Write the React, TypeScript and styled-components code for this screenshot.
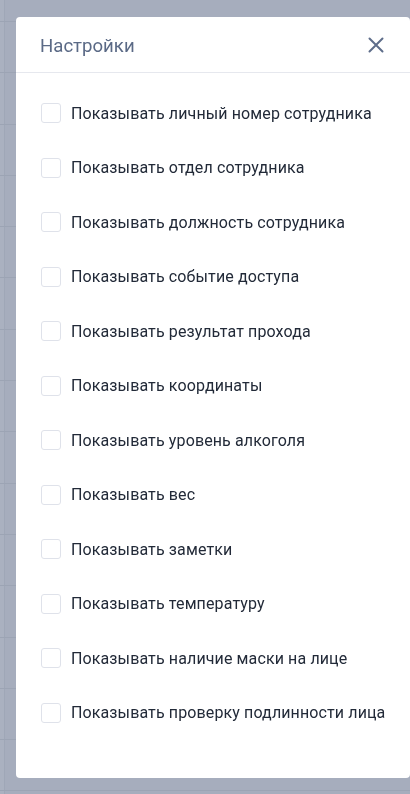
import React from "react";
import styled, { createGlobalStyle } from "styled-components";

const GlobalStyle = createGlobalStyle`
  html, body {
    margin: 0;
    padding: 0;
    background: #a9b0bf;
  }
  body {
    font-family: Roboto, "Liberation Sans", sans-serif;
  }
`;

const Page = styled.div`
  padding-top: 21px;
  height: 794px;
  box-sizing: border-box;
  overflow: hidden;
  background: linear-gradient(90deg, #aab1c0 0 4px, #9fa7b7 4px 5px, #a6adbd 5px);
`;

const BgRow = styled.div`
  height: 51.3px;
  border-top: 1px solid #9ca4b4;
  box-sizing: border-box;
`;

const Modal = styled.div`
  position: fixed;
  top: 17px;
  left: 16px;
  width: 394px;
  height: 761px;
  background: #ffffff;
  border-radius: 4px;
  display: flex;
  flex-direction: column;
  overflow: hidden;
`;

const Header = styled.div`
  height: 55px;
  flex-shrink: 0;
  display: flex;
  align-items: center;
  justify-content: space-between;
  padding: 0 26px 0 24px;
  border-bottom: 1px solid #e6e8ee;
`;

const Title = styled.h2`
  margin: 0;
  font-size: 18.6px;
  font-weight: 400;
  color: #5b6a86;
  padding-top: 2px;
`;

const CloseButton = styled.button`
  border: none;
  background: none;
  padding: 0;
  width: 16px;
  height: 16px;
  display: flex;
  align-items: center;
  justify-content: center;
  cursor: pointer;
`;

const List = styled.div`
  display: flex;
  flex-direction: column;
  gap: 34.5px;
  padding: 30px 24px 0 25px;
`;

const Row = styled.label`
  display: flex;
  align-items: center;
  gap: 10px;
  height: 20px;
  cursor: pointer;
`;

const Box = styled.span`
  width: 18px;
  height: 18px;
  flex-shrink: 0;
  border: 1px solid #dfe2ea;
  border-radius: 3px;
  background: #fff;
`;

const Label = styled.span`
  font-size: 16px;
  letter-spacing: 0.12px;
  color: #222a38;
  white-space: nowrap;
`;

const options = [
  "Показывать личный номер сотрудника",
  "Показывать отдел сотрудника",
  "Показывать должность сотрудника",
  "Показывать событие доступа",
  "Показывать результат прохода",
  "Показывать координаты",
  "Показывать уровень алкоголя",
  "Показывать вес",
  "Показывать заметки",
  "Показывать температуру",
  "Показывать наличие маски на лице",
  "Показывать проверку подлинности лица",
];

export default function App() {
  return (
    <>
      <GlobalStyle />
      <Page>
        {Array.from({ length: 16 }).map((_, i) => (
          <BgRow key={i} />
        ))}
      </Page>
      <Modal>
        <Header>
          <Title>Настройки</Title>
          <CloseButton aria-label="close">
            <svg width="16" height="16" viewBox="0 0 16 16">
              <path
                d="M1.5 1.5 L14.5 14.5 M14.5 1.5 L1.5 14.5"
                stroke="#5e6d8a"
                strokeWidth="2"
                strokeLinecap="round"
              />
            </svg>
          </CloseButton>
        </Header>
        <List>
          {options.map((text) => (
            <Row key={text}>
              <Box />
              <Label>{text}</Label>
            </Row>
          ))}
        </List>
      </Modal>
    </>
  );
}
